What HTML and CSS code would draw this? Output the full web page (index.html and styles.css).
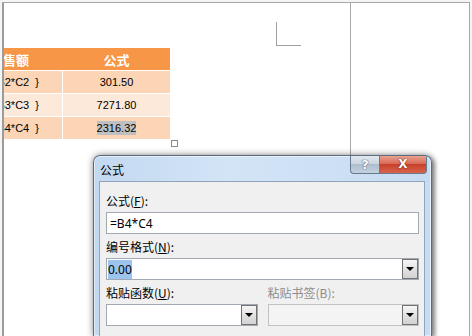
FILE: index.html
```html
<!DOCTYPE html>
<html lang="zh-CN">
<head>
<meta charset="utf-8">
<title>公式</title>
<link rel="stylesheet" href="styles.css">
</head>
<body>
<div class="viewport">
  <div class="page">
    <div class="corner-mark"></div>
    <div class="table">
      <div class="cell head c1"><span>销售额</span></div>
      <div class="cell head c2">公式</div>
      <div class="cell dark c1 code"><span>{=B2*C2&nbsp;&nbsp;}</span></div>
      <div class="cell dark c2">301.50</div>
      <div class="cell light c1 code"><span>{=B3*C3&nbsp;&nbsp;}</span></div>
      <div class="cell light c2">7271.80</div>
      <div class="cell dark c1 code"><span>{=B4*C4&nbsp;&nbsp;}</span></div>
      <div class="cell dark c2"><span class="sel-gray">2316.32</span></div>
    </div>
    <div class="handle"></div>
  </div>
  <div class="margin-area"></div>
</div>

<div class="dialog">
  <div class="titlebar">
    <div class="title">公式</div>
    <div class="caption-buttons">
      <div class="cap help">?</div>
      <div class="cap close">X</div>
    </div>
  </div>
  <div class="panel">
    <div class="label">公式(<u>F</u>):</div>
    <div class="textbox">=B4*C4</div>
    <div class="label">编号格式(<u>N</u>):</div>
    <div class="combo"><span class="combo-text"><span class="sel-blue">0.00</span></span><span class="drop"><span class="tri"></span></span></div>
    <div class="pair">
      <div class="field">
        <div class="label">粘贴函数(<u>U</u>):</div>
        <div class="combo"><span class="combo-text"></span><span class="drop"><span class="tri"></span></span></div>
      </div>
      <div class="field">
        <div class="label disabled">粘贴书签(B):</div>
        <div class="combo disabled"><span class="combo-text"></span><span class="drop"><span class="tri"></span></span></div>
      </div>
    </div>
  </div>
</div>
</body>
</html>
```

FILE: styles.css
```css
html, body {
  margin: 0;
  padding: 0;
}
body {
  width: 472px;
  height: 336px;
  overflow: hidden;
  position: relative;
  background: #f4f4f4;
  font-family: "Liberation Sans", "Noto Sans CJK SC", sans-serif;
}
.viewport {
  margin: 2px 0 0 2px;
  width: 465px;
  height: 333px;
  background: #fff;
  border-top: 1px solid #a8a8a8;
  border-left: 2px solid #9c9c9c;
  border-right: 1px solid #a8a8a8;
  display: flex;
}
.page {
  width: 346px;
  border-right: 1px solid #a8a8a8;
  display: flex;
  flex-direction: column;
}
.margin-area {
  flex: 1;
}
.corner-mark {
  margin: 19px 0 0 272px;
  width: 24px;
  height: 23px;
  border-left: 1px solid #a0a0a0;
  border-bottom: 1px solid #a0a0a0;
}
.table {
  margin-top: 2px;
  display: grid;
  grid-template-columns: 59px 107px;
  grid-template-rows: 22px 22px 22px 22px;
  row-gap: 1px;
  width: 166px;
  background: #fff;
}
.cell {
  display: flex;
  align-items: center;
  justify-content: center;
  font-size: 11px;
  color: #000;
  white-space: nowrap;
  overflow: hidden;
}
.cell.c1 {
  border-right: 1px solid #fff;
  justify-content: flex-end;
}
.cell.head {
  background: #f79646;
  color: #fff;
  font-weight: bold;
  font-family: "Noto Sans CJK SC", sans-serif;
  font-size: 13px;
}
.cell.head.c1 {
  padding-right: 33px;
  border-right-color: #f79646;
}
.cell.code {
  padding-right: 23px;
}
.cell.dark {
  background: #fbd5b5;
}
.cell.light {
  background: #fde9d9;
}
.sel-gray {
  background: #c0c0c0;
  padding: 1px 0;
}
.handle {
  margin: 1px 0 0 167px;
  width: 5px;
  height: 5px;
  border: 1px solid #8a8a8a;
  background: #fff;
}

/* dialog */
.dialog {
  position: absolute;
  left: 93px;
  top: 155px;
  width: 337px;
  height: 180px;
  overflow: hidden;
  border: 1px solid #5c6c80;
  border-bottom: none;
  border-radius: 7px 7px 0 0;
  background: linear-gradient(90deg, #c3d9f1 0%, #d3e4f6 40%, #c7dcf2 100%);
  box-shadow: 0 0 7px rgba(0, 0, 0, 0.45), 3px 2px 4px rgba(0, 0, 0, 0.35), inset 0 0 0 1px rgba(255, 255, 255, 0.55);
  display: flex;
  flex-direction: column;
}
.titlebar {
  height: 25px;
  flex: none;
  display: flex;
  justify-content: space-between;
  align-items: flex-start;
}
.title {
  padding: 6px 0 0 6px;
  font-family: "Noto Sans CJK SC", sans-serif;
  font-size: 12px;
  line-height: 16px;
  color: #000;
}
.caption-buttons {
  display: flex;
  margin-right: 4px;
  margin-top: -1px;
}
.cap {
  height: 18px;
  border: 1px solid #6a7a8d;
  border-top: none;
  display: flex;
  align-items: center;
  justify-content: center;
  font-family: "DejaVu Sans", sans-serif;
  font-weight: bold;
  color: #fff;
}
.help {
  width: 28px;
  border-radius: 0 0 0 4px;
  border-right: none;
  background: linear-gradient(#e4eaf1, #cbd5e0 48%, #aebdcd 52%, #c4d2e0);
  color: #fff;
  font-size: 13px;
  text-shadow: 0 0 1px #3b4a5c, 0 0 1px #3b4a5c;
}
.close {
  width: 46px;
  border-radius: 0 0 4px 0;
  background: linear-gradient(#e9a898, #d86a55 48%, #c7402b 52%, #d9644c);
  font-size: 12px;
  text-shadow: 0 0 1px #5a1a10, 0 0 1px #5a1a10;
}
.panel {
  margin: 0 6px 0 5px;
  flex: 1;
  background: #f0f0f0;
  border: 1px solid #8fa3ba;
  border-bottom: none;
  padding: 11px 5px 0 6px;
  display: flex;
  flex-direction: column;
  font-family: "Noto Sans CJK SC", sans-serif;
  font-size: 12px;
  color: #000;
}
.label {
  height: 16px;
  line-height: 16px;
  margin-bottom: 3px;
}
.label.disabled {
  color: #8d8d8d;
}
.textbox, .combo {
  height: 20px;
  border: 1px solid #a3a9b1;
  background: #fff;
  margin-bottom: 5px;
  display: flex;
  align-items: center;
  font-family: "Noto Sans", sans-serif;
  font-size: 12px;
}
.textbox {
  padding-left: 3px;
}
.combo-text {
  flex: 1;
  padding-left: 1px;
}
.sel-blue {
  background: #9cc4ec;
  padding: 1px 0;
}
.drop {
  width: 14px;
  height: 18px;
  border: 1px solid #727272;
  background: linear-gradient(#f6f6f6, #e2e2e2 50%, #d2d2d2);
  display: flex;
  align-items: center;
  justify-content: center;
}
.tri {
  width: 0;
  height: 0;
  border-left: 4px solid transparent;
  border-right: 4px solid transparent;
  border-top: 4px solid #000;
}
.pair {
  display: grid;
  grid-template-columns: 1fr 1fr;
  column-gap: 10px;
}
.combo.disabled {
  background: #f4f4f4;
  border-color: #c2c2c2;
}
```
